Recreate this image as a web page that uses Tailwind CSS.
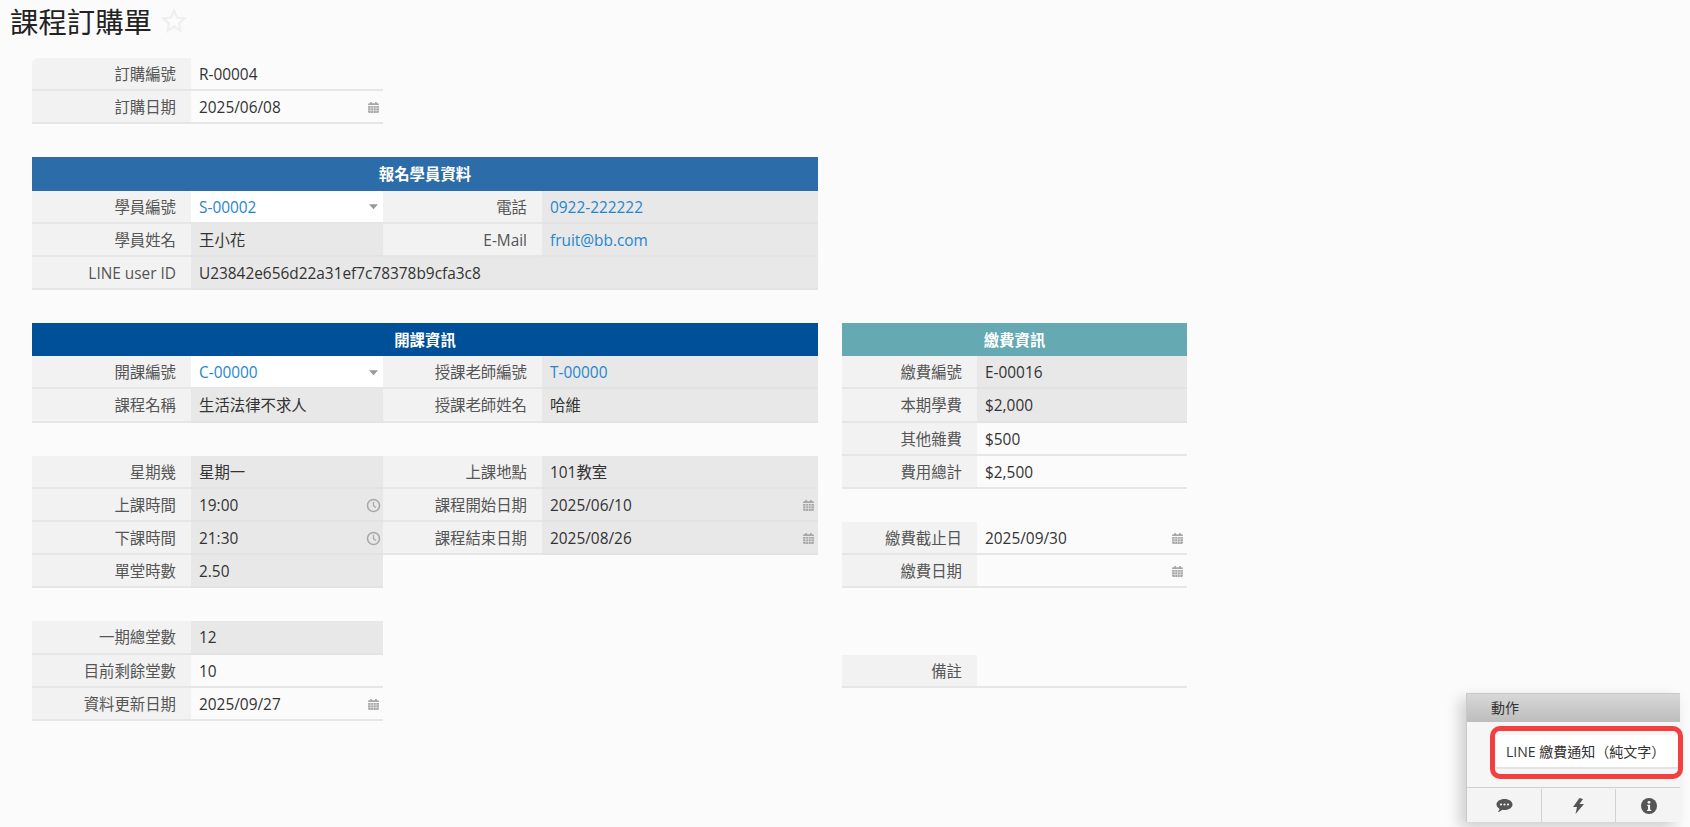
<!doctype html>
<html lang="zh-Hant">
<head>
<meta charset="utf-8">
<script src="https://cdn.jsdelivr.net/npm/@tailwindcss/browser@4"></script>
</head>
<body class="bg-[#fbfbfb] font-['Open_Sans','Noto_Sans_CJK_TC',sans-serif] text-[15.4px] text-[#333] overflow-hidden">
<svg class="hidden">
  <symbol id="cal" viewBox="0 0 12 12"><path fill="#a6a6a6" d="M1 4.500h10V10a1 1 0 0 1-1 1H2a1 1 0 0 1-1-1zM2 2h1V1h1.500v1h3V1H9v1h1a1 1 0 0 1 1 1v.8H1V3a1 1 0 0 1 1-1z"/><path stroke="#e8e8e8" stroke-width=".6" d="M1 6.500h10M1 8.700h10M3.600 4.500V11M6 4.500V11M8.400 4.500V11"/></symbol>
  <symbol id="clock" viewBox="0 0 14 14"><circle cx="7" cy="7" r="5.600" fill="none" stroke="#a9a9a9" stroke-width="1.500"/><path d="M7 3.600V7.300L9.400 8.800" fill="none" stroke="#a9a9a9" stroke-width="1.200"/></symbol>
  <symbol id="caret" viewBox="0 0 8 5"><path fill="#999" d="M0 0h8L4 4.500z"/></symbol>
</svg>

<main class="h-[827px] w-[1690px] relative">
  <header class="h-[58px] pl-[10px] pt-[2px] flex items-start gap-[9px]">
    <h1 class="text-[28.4px] leading-[40px] text-[#222]">課程訂購單</h1>
    <svg class="w-[26px] h-[26px] mt-[6px]" viewBox="0 0 24 24"><path fill="none" stroke="#efefef" stroke-width="2" d="M12 2.500l2.900 6.300 6.900.8-5.100 4.700 1.400 6.800L12 17.200l-6.100 3.900 1.400-6.800-5.100-4.700 6.900-.8z"/></svg>
  </header>

  <section class="ml-[32px] grid grid-cols-[159px_192px_159px_276px_24px_135px_210px] auto-rows-[33.15px] w-fit">
    <div class="col-start-1 row-start-1 bg-[#f2f2f2] border-b-2 border-[#e6e6e6] rounded-tl-[6px] text-right pr-[15px] leading-[33px] text-[#555]">訂購編號</div>
    <div class="col-start-2 row-start-1 bg-[#fbfbfb] border-b-2 border-[#e6e6e6] pl-2 leading-[33px]">R-00004</div>

    <div class="col-start-1 row-start-2 bg-[#f2f2f2] border-b-2 border-[#e6e6e6] text-right pr-[15px] leading-[33px] text-[#555]">訂購日期</div>
    <div class="col-start-2 row-start-2 bg-[#fbfbfb] border-b-2 border-[#e6e6e6] pl-2 pr-[3px] pt-[2px] leading-[33px] flex justify-between items-center"><span>2025/06/08</span><svg class="w-[13px] h-[13px]"><use href="#cal"/></svg></div>

    <div class="col-start-1 col-end-5 row-start-4 bg-[#2c6ca8] text-white font-semibold text-center leading-[36px]">報名學員資料</div>

    <div class="col-start-1 row-start-5 bg-[#f2f2f2] border-b-2 border-[#e6e6e6] text-right pr-[15px] leading-[33px] text-[#555]">學員編號</div>
    <div class="col-start-2 row-start-5 bg-white border-b-2 border-[#e6e6e6] pl-2 pr-[5px] pt-[2px] leading-[33px] flex justify-between items-center text-[#1f86d0]"><span>S-00002</span><svg class="w-[9px] h-[6px]"><use href="#caret"/></svg></div>
    <div class="col-start-3 row-start-5 bg-[#f2f2f2] border-b-2 border-[#e6e6e6] text-right pr-[15px] leading-[33px] text-[#555]">電話</div>
    <div class="col-start-4 row-start-5 bg-[#e8e8e8] border-b-2 border-[#e3e3e3] pl-2 leading-[33px] text-[#1f86d0]">0922-222222</div>

    <div class="col-start-1 row-start-6 bg-[#f2f2f2] border-b-2 border-[#e6e6e6] text-right pr-[15px] leading-[33px] text-[#555]">學員姓名</div>
    <div class="col-start-2 row-start-6 bg-[#e8e8e8] border-b-2 border-[#e3e3e3] pl-2 leading-[33px]">王小花</div>
    <div class="col-start-3 row-start-6 bg-[#f2f2f2] border-b-2 border-[#e6e6e6] text-right pr-[15px] leading-[33px] text-[#555]">E-Mail</div>
    <div class="col-start-4 row-start-6 bg-[#e8e8e8] border-b-2 border-[#e3e3e3] pl-2 leading-[33px] text-[#1f86d0]">fruit@bb.com</div>

    <div class="col-start-1 row-start-7 bg-[#f2f2f2] border-b-2 border-[#e6e6e6] text-right pr-[15px] leading-[33px] text-[#555]">LINE user ID</div>
    <div class="col-start-2 col-end-5 row-start-7 bg-[#e8e8e8] border-b-2 border-[#e3e3e3] pl-2 leading-[33px]">U23842e656d22a31ef7c78378b9cfa3c8</div>

    <div class="col-start-1 col-end-5 row-start-9 bg-[#004f99] text-white font-semibold text-center leading-[36px]">開課資訊</div>
    <div class="col-start-6 col-end-8 row-start-9 bg-[#65a9b3] text-white font-semibold text-center leading-[36px]">繳費資訊</div>

    <div class="col-start-1 row-start-10 bg-[#f2f2f2] border-b-2 border-[#e6e6e6] text-right pr-[15px] leading-[33px] text-[#555]">開課編號</div>
    <div class="col-start-2 row-start-10 bg-white border-b-2 border-[#e6e6e6] pl-2 pr-[5px] pt-[2px] leading-[33px] flex justify-between items-center text-[#1f86d0]"><span>C-00000</span><svg class="w-[9px] h-[6px]"><use href="#caret"/></svg></div>
    <div class="col-start-3 row-start-10 bg-[#f2f2f2] border-b-2 border-[#e6e6e6] text-right pr-[15px] leading-[33px] text-[#555]">授課老師編號</div>
    <div class="col-start-4 row-start-10 bg-[#e8e8e8] border-b-2 border-[#e3e3e3] pl-2 leading-[33px] text-[#1f86d0]">T-00000</div>
    <div class="col-start-6 row-start-10 bg-[#f2f2f2] border-b-2 border-[#e6e6e6] text-right pr-[15px] leading-[33px] text-[#555]">繳費編號</div>
    <div class="col-start-7 row-start-10 bg-[#e8e8e8] border-b-2 border-[#e3e3e3] pl-2 leading-[33px]">E-00016</div>

    <div class="col-start-1 row-start-11 bg-[#f2f2f2] border-b-2 border-[#e6e6e6] text-right pr-[15px] leading-[33px] text-[#555]">課程名稱</div>
    <div class="col-start-2 row-start-11 bg-[#e8e8e8] border-b-2 border-[#e3e3e3] pl-2 leading-[33px]">生活法律不求人</div>
    <div class="col-start-3 row-start-11 bg-[#f2f2f2] border-b-2 border-[#e6e6e6] text-right pr-[15px] leading-[33px] text-[#555]">授課老師姓名</div>
    <div class="col-start-4 row-start-11 bg-[#e8e8e8] border-b-2 border-[#e3e3e3] pl-2 leading-[33px]">哈維</div>
    <div class="col-start-6 row-start-11 bg-[#f2f2f2] border-b-2 border-[#e6e6e6] text-right pr-[15px] leading-[33px] text-[#555]">本期學費</div>
    <div class="col-start-7 row-start-11 bg-[#e8e8e8] border-b-2 border-[#e3e3e3] pl-2 leading-[33px]">$2,000</div>

    <div class="col-start-6 row-start-12 bg-[#f2f2f2] border-b-2 border-[#e6e6e6] text-right pr-[15px] leading-[33px] text-[#555]">其他雜費</div>
    <div class="col-start-7 row-start-12 bg-[#fbfbfb] border-b-2 border-[#e6e6e6] pl-2 leading-[33px]">$500</div>

    <div class="col-start-1 row-start-13 bg-[#f2f2f2] border-b-2 border-[#e6e6e6] text-right pr-[15px] leading-[33px] text-[#555]">星期幾</div>
    <div class="col-start-2 row-start-13 bg-[#e8e8e8] border-b-2 border-[#e3e3e3] pl-2 leading-[33px]">星期一</div>
    <div class="col-start-3 row-start-13 bg-[#f2f2f2] border-b-2 border-[#e6e6e6] text-right pr-[15px] leading-[33px] text-[#555]">上課地點</div>
    <div class="col-start-4 row-start-13 bg-[#e8e8e8] border-b-2 border-[#e3e3e3] pl-2 leading-[33px]">101教室</div>
    <div class="col-start-6 row-start-13 bg-[#f2f2f2] border-b-2 border-[#e6e6e6] text-right pr-[15px] leading-[33px] text-[#555]">費用總計</div>
    <div class="col-start-7 row-start-13 bg-[#fbfbfb] border-b-2 border-[#e6e6e6] pl-2 leading-[33px]">$2,500</div>

    <div class="col-start-1 row-start-14 bg-[#f2f2f2] border-b-2 border-[#e6e6e6] text-right pr-[15px] leading-[33px] text-[#555]">上課時間</div>
    <div class="col-start-2 row-start-14 bg-[#e8e8e8] border-b-2 border-[#e3e3e3] pl-2 pr-[2px] pt-[2px] leading-[33px] flex justify-between items-center"><span>19:00</span><svg class="w-[15px] h-[15px]"><use href="#clock"/></svg></div>
    <div class="col-start-3 row-start-14 bg-[#f2f2f2] border-b-2 border-[#e6e6e6] text-right pr-[15px] leading-[33px] text-[#555]">課程開始日期</div>
    <div class="col-start-4 row-start-14 bg-[#e8e8e8] border-b-2 border-[#e3e3e3] pl-2 pr-[3px] pt-[2px] leading-[33px] flex justify-between items-center"><span>2025/06/10</span><svg class="w-[13px] h-[13px]"><use href="#cal"/></svg></div>

    <div class="col-start-1 row-start-15 bg-[#f2f2f2] border-b-2 border-[#e6e6e6] text-right pr-[15px] leading-[33px] text-[#555]">下課時間</div>
    <div class="col-start-2 row-start-15 bg-[#e8e8e8] border-b-2 border-[#e3e3e3] pl-2 pr-[2px] pt-[2px] leading-[33px] flex justify-between items-center"><span>21:30</span><svg class="w-[15px] h-[15px]"><use href="#clock"/></svg></div>
    <div class="col-start-3 row-start-15 bg-[#f2f2f2] border-b-2 border-[#e6e6e6] text-right pr-[15px] leading-[33px] text-[#555]">課程結束日期</div>
    <div class="col-start-4 row-start-15 bg-[#e8e8e8] border-b-2 border-[#e3e3e3] pl-2 pr-[3px] pt-[2px] leading-[33px] flex justify-between items-center"><span>2025/08/26</span><svg class="w-[13px] h-[13px]"><use href="#cal"/></svg></div>
    <div class="col-start-6 row-start-15 bg-[#f2f2f2] border-b-2 border-[#e6e6e6] text-right pr-[15px] leading-[33px] text-[#555]">繳費截止日</div>
    <div class="col-start-7 row-start-15 bg-[#fbfbfb] border-b-2 border-[#e6e6e6] pl-2 pr-[3px] pt-[2px] leading-[33px] flex justify-between items-center"><span>2025/09/30</span><svg class="w-[13px] h-[13px]"><use href="#cal"/></svg></div>

    <div class="col-start-1 row-start-16 bg-[#f2f2f2] border-b-2 border-[#e6e6e6] text-right pr-[15px] leading-[33px] text-[#555]">單堂時數</div>
    <div class="col-start-2 row-start-16 bg-[#e8e8e8] border-b-2 border-[#e3e3e3] pl-2 leading-[33px]">2.50</div>
    <div class="col-start-6 row-start-16 bg-[#f2f2f2] border-b-2 border-[#e6e6e6] text-right pr-[15px] leading-[33px] text-[#555]">繳費日期</div>
    <div class="col-start-7 row-start-16 bg-[#fbfbfb] border-b-2 border-[#e6e6e6] pl-2 pr-[3px] pt-[2px] flex justify-end items-center"><svg class="w-[13px] h-[13px]"><use href="#cal"/></svg></div>

    <div class="col-start-1 row-start-18 bg-[#f2f2f2] border-b-2 border-[#e6e6e6] text-right pr-[15px] leading-[33px] text-[#555]">一期總堂數</div>
    <div class="col-start-2 row-start-18 bg-[#e8e8e8] border-b-2 border-[#e3e3e3] pl-2 leading-[33px]">12</div>

    <div class="col-start-1 row-start-19 bg-[#f2f2f2] border-b-2 border-[#e6e6e6] text-right pr-[15px] leading-[33px] text-[#555]">目前剩餘堂數</div>
    <div class="col-start-2 row-start-19 bg-[#fbfbfb] border-b-2 border-[#e6e6e6] pl-2 leading-[33px]">10</div>
    <div class="col-start-6 row-start-19 bg-[#f2f2f2] border-b-2 border-[#e6e6e6] text-right pr-[15px] leading-[33px] text-[#555]">備註</div>
    <div class="col-start-7 row-start-19 bg-[#fbfbfb] border-b-2 border-[#e6e6e6]"></div>

    <div class="col-start-1 row-start-20 bg-[#f2f2f2] border-b-2 border-[#e6e6e6] text-right pr-[15px] leading-[33px] text-[#555]">資料更新日期</div>
    <div class="col-start-2 row-start-20 bg-[#fbfbfb] border-b-2 border-[#e6e6e6] pl-2 pr-[3px] pt-[2px] leading-[33px] flex justify-between items-center"><span>2025/09/27</span><svg class="w-[13px] h-[13px]"><use href="#cal"/></svg></div>
  </section>

  <aside class="absolute left-[1466px] top-[693px] w-[214px] h-[129px] flex flex-col shadow-[-6px_6px_14px_rgba(0,0,0,0.18)] border-l border-t border-[#c9c9c9] bg-[#f6f6f6] text-[14px]">
    <div class="h-[28px] shrink-0 bg-gradient-to-b from-[#d8d8d8] to-[#bdbdbd] pl-6 leading-[28px] text-[#333]">動作</div>
    <div class="h-[66px] shrink-0 pt-[9px] pl-[29px] border-b border-[#cfcfcf]">
      <div class="h-[34px] w-[185px] bg-white border-b-2 border-[#e4e4e4] pl-[10px] leading-[34px] text-[#333] mt-[4px]">LINE 繳費通知（純文字）</div>
    </div>
    <div class="flex-1 grid grid-cols-[75px_74px_65px] bg-[#f4f4f4] pt-[1px]">
      <div class="flex items-center justify-center border-r border-[#d2d2d2]"><svg class="w-[17px] h-[15px]" viewBox="0 0 17 15"><path fill="#555" d="M8.500 1C13 1 16.500 3.400 16.500 6.500S13 12 8.500 12c-.8 0-1.500-.1-2.200-.2C5 13 3.500 13.800 1.800 14c.9-1 1.500-2 1.600-3.300C1.600 9.700.5 8.200.5 6.500.5 3.400 4 1 8.500 1z"/><circle cx="5" cy="6.500" r="1.100" fill="#f4f4f4"/><circle cx="8.500" cy="6.500" r="1.100" fill="#f4f4f4"/><circle cx="12" cy="6.500" r="1.100" fill="#f4f4f4"/></svg></div>
      <div class="flex items-center justify-center border-r border-[#d2d2d2]"><svg class="w-[13px] h-[16px]" viewBox="0 0 13 16"><path fill="#555" d="M7.500 0L1 9h4L3.500 16 12 6H7.500L11 1z"/></svg></div>
      <div class="flex items-center justify-center"><svg class="w-[16px] h-[16px]" viewBox="0 0 16 16"><circle cx="8" cy="8" r="8" fill="#555"/><circle cx="8" cy="4.300" r="1.400" fill="#f4f4f4"/><path fill="#f4f4f4" d="M6.200 6.800h2.900v5H10.200v1.300H6V11.800h1V8.100H6.200z"/></svg></div>
    </div>
  </aside>
  <div class="absolute left-[1490px] top-[726px] w-[193px] h-[53px] rounded-[10px] border-[5px] border-[#f24040]"></div>
</main>
</body>
</html>
